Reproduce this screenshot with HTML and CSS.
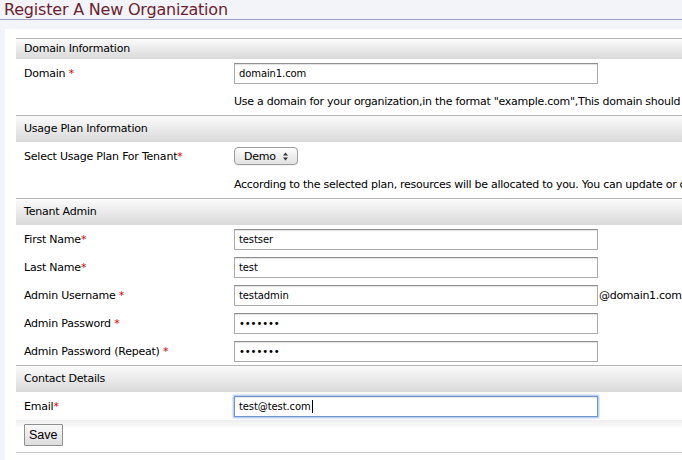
FILE: index.html
```html
<!DOCTYPE html>
<html>
<head>
<meta charset="utf-8">
<title>Register A New Organization</title>
<link rel="stylesheet" href="styles.css">
</head>
<body>
<h1 class="page-title">Register A New Organization</h1>
<div class="panel">
  <div class="form">
    <div class="section section-first">Domain Information</div>
    <div class="row">
      <div class="label">Domain <span class="req">*</span></div>
      <div class="field"><input class="text" type="text" value="domain1.com"></div>
    </div>
    <div class="row help">Use a domain for your organization,in the format "example.com",This domain should</div>

    <div class="section">Usage Plan Information</div>
    <div class="row">
      <div class="label">Select Usage Plan For Tenant<span class="req">*</span></div>
      <div class="field">
        <span class="select">
          <span class="select-text">Demo</span>
          <svg class="select-arrows" width="7" height="9" viewBox="0 0 7 9"><path d="M3.5 0.5 L6 3.5 H1 Z M3.5 8.5 L6 5.5 H1 Z" fill="#333"/></svg>
        </span>
      </div>
    </div>
    <div class="row help">According to the selected plan, resources will be allocated to you. You can update or change</div>

    <div class="section">Tenant Admin</div>
    <div class="row">
      <div class="label">First Name<span class="req">*</span></div>
      <div class="field"><input class="text" type="text" value="testser"></div>
    </div>
    <div class="row">
      <div class="label">Last Name<span class="req">*</span></div>
      <div class="field"><input class="text" type="text" value="test"></div>
    </div>
    <div class="row">
      <div class="label">Admin Username <span class="req">*</span></div>
      <div class="field"><input class="text" type="text" value="testadmin"><span class="suffix">@domain1.com</span></div>
    </div>
    <div class="row">
      <div class="label">Admin Password <span class="req">*</span></div>
      <div class="field"><input class="text" type="password" value="1234567"></div>
    </div>
    <div class="row">
      <div class="label">Admin Password (Repeat) <span class="req">*</span></div>
      <div class="field"><input class="text" type="password" value="1234567"></div>
    </div>

    <div class="section">Contact Details</div>
    <div class="row">
      <div class="label">Email<span class="req">*</span></div>
      <div class="field"><span class="text focused">test@test.com<span class="caret"></span></span></div>
    </div>
    <div class="buttons">
      <button class="btn" type="button">Save</button>
    </div>
  </div>
</div>
</body>
</html>
```
FILE: styles.css
```css
html, body {
  margin: 0;
  padding: 0;
}
body {
  background: #f3f4f9;
  font-family: "DejaVu Sans", "Liberation Sans", sans-serif;
  font-size: 11px;
  letter-spacing: -0.22px;
  color: #000;
  overflow: hidden;
  width: 682px;
  height: 460px;
}
.page-title {
  margin: 0;
  padding-left: 4px;
  height: 19px;
  line-height: 19px;
  font-size: 16px;
  letter-spacing: -0.2px;
  font-weight: normal;
  color: #6b1f2f;
  border-bottom: 1px solid #9ea2c0;
  white-space: nowrap;
}
.panel {
  margin: 9px 0 0 5px;
  background: #fff;
  padding: 9px 0 0 11px;
  height: 440px;
  overflow: hidden;
}
.form {
  width: 666px;
}
.section {
  border-top: 1px solid #b6b6b6;
  background: linear-gradient(#fbfbfb, #d9d9d9);
  height: 26px;
  line-height: 26px;
  padding-left: 8px;
}
.section-first {
  height: 20px;
  line-height: 20px;
}
.row {
  display: flex;
  align-items: center;
  height: 28px;
  white-space: nowrap;
}
.label {
  width: 210px;
  padding-left: 8px;
}
.req {
  color: #d30000;
}
.help {
  padding-left: 218px;
  letter-spacing: -0.27px;
}
.field {
  display: flex;
  align-items: center;
}
.text {
  display: block;
  width: 364px;
  height: 21px;
  box-sizing: border-box;
  border: 1px solid #ababab;
  border-top-color: #8f8f8f;
  box-shadow: inset 0 1px 1px rgba(0,0,0,0.12);
  padding: 0 4px;
  margin: 0;
  font-family: "DejaVu Sans", sans-serif;
  font-size: 10px;
  letter-spacing: -0.1px;
  color: #000;
  background: #fff;
  outline: none;
}
span.text {
  line-height: 19px;
}
.focused {
  border: 1px solid #6e95cf;
  box-shadow: 0 0 2px 1px #9dbbe6, inset 0 1px 1px rgba(0,0,0,0.1);
}
.caret {
  display: inline-block;
  width: 1px;
  height: 13px;
  background: #000;
  vertical-align: -3px;
  margin-left: 1px;
}
.suffix {
  margin-left: 1px;
  letter-spacing: -0.3px;
}
.select {
  display: inline-flex;
  align-items: center;
  justify-content: space-between;
  box-sizing: border-box;
  width: 64px;
  height: 18px;
  padding: 0 8px 0 9px;
  border: 1px solid #9c9c9c;
  border-radius: 4px;
  background: linear-gradient(#ffffff, #eeeeee 50%, #e2e2e2);
  box-shadow: 0 1px 0 rgba(0,0,0,0.05);
}
.select-arrows {
  display: block;
}
.buttons {
  height: 33px;
  padding: 4px 0 0 8px;
  box-sizing: border-box;
  background: linear-gradient(#eeeeee, #ffffff 9px);
  border-bottom: 1px solid #c8c8c8;
}
.btn {
  display: block;
  height: 22px;
  padding: 0 4px;
  font-family: "Liberation Sans", Arial, sans-serif;
  font-size: 12.5px;
  letter-spacing: 0;
  color: #000;
  border: 1px solid #8f8f8f;
  border-radius: 1px;
  background: linear-gradient(#f8f8f8, #dcdcdc);
}
```
